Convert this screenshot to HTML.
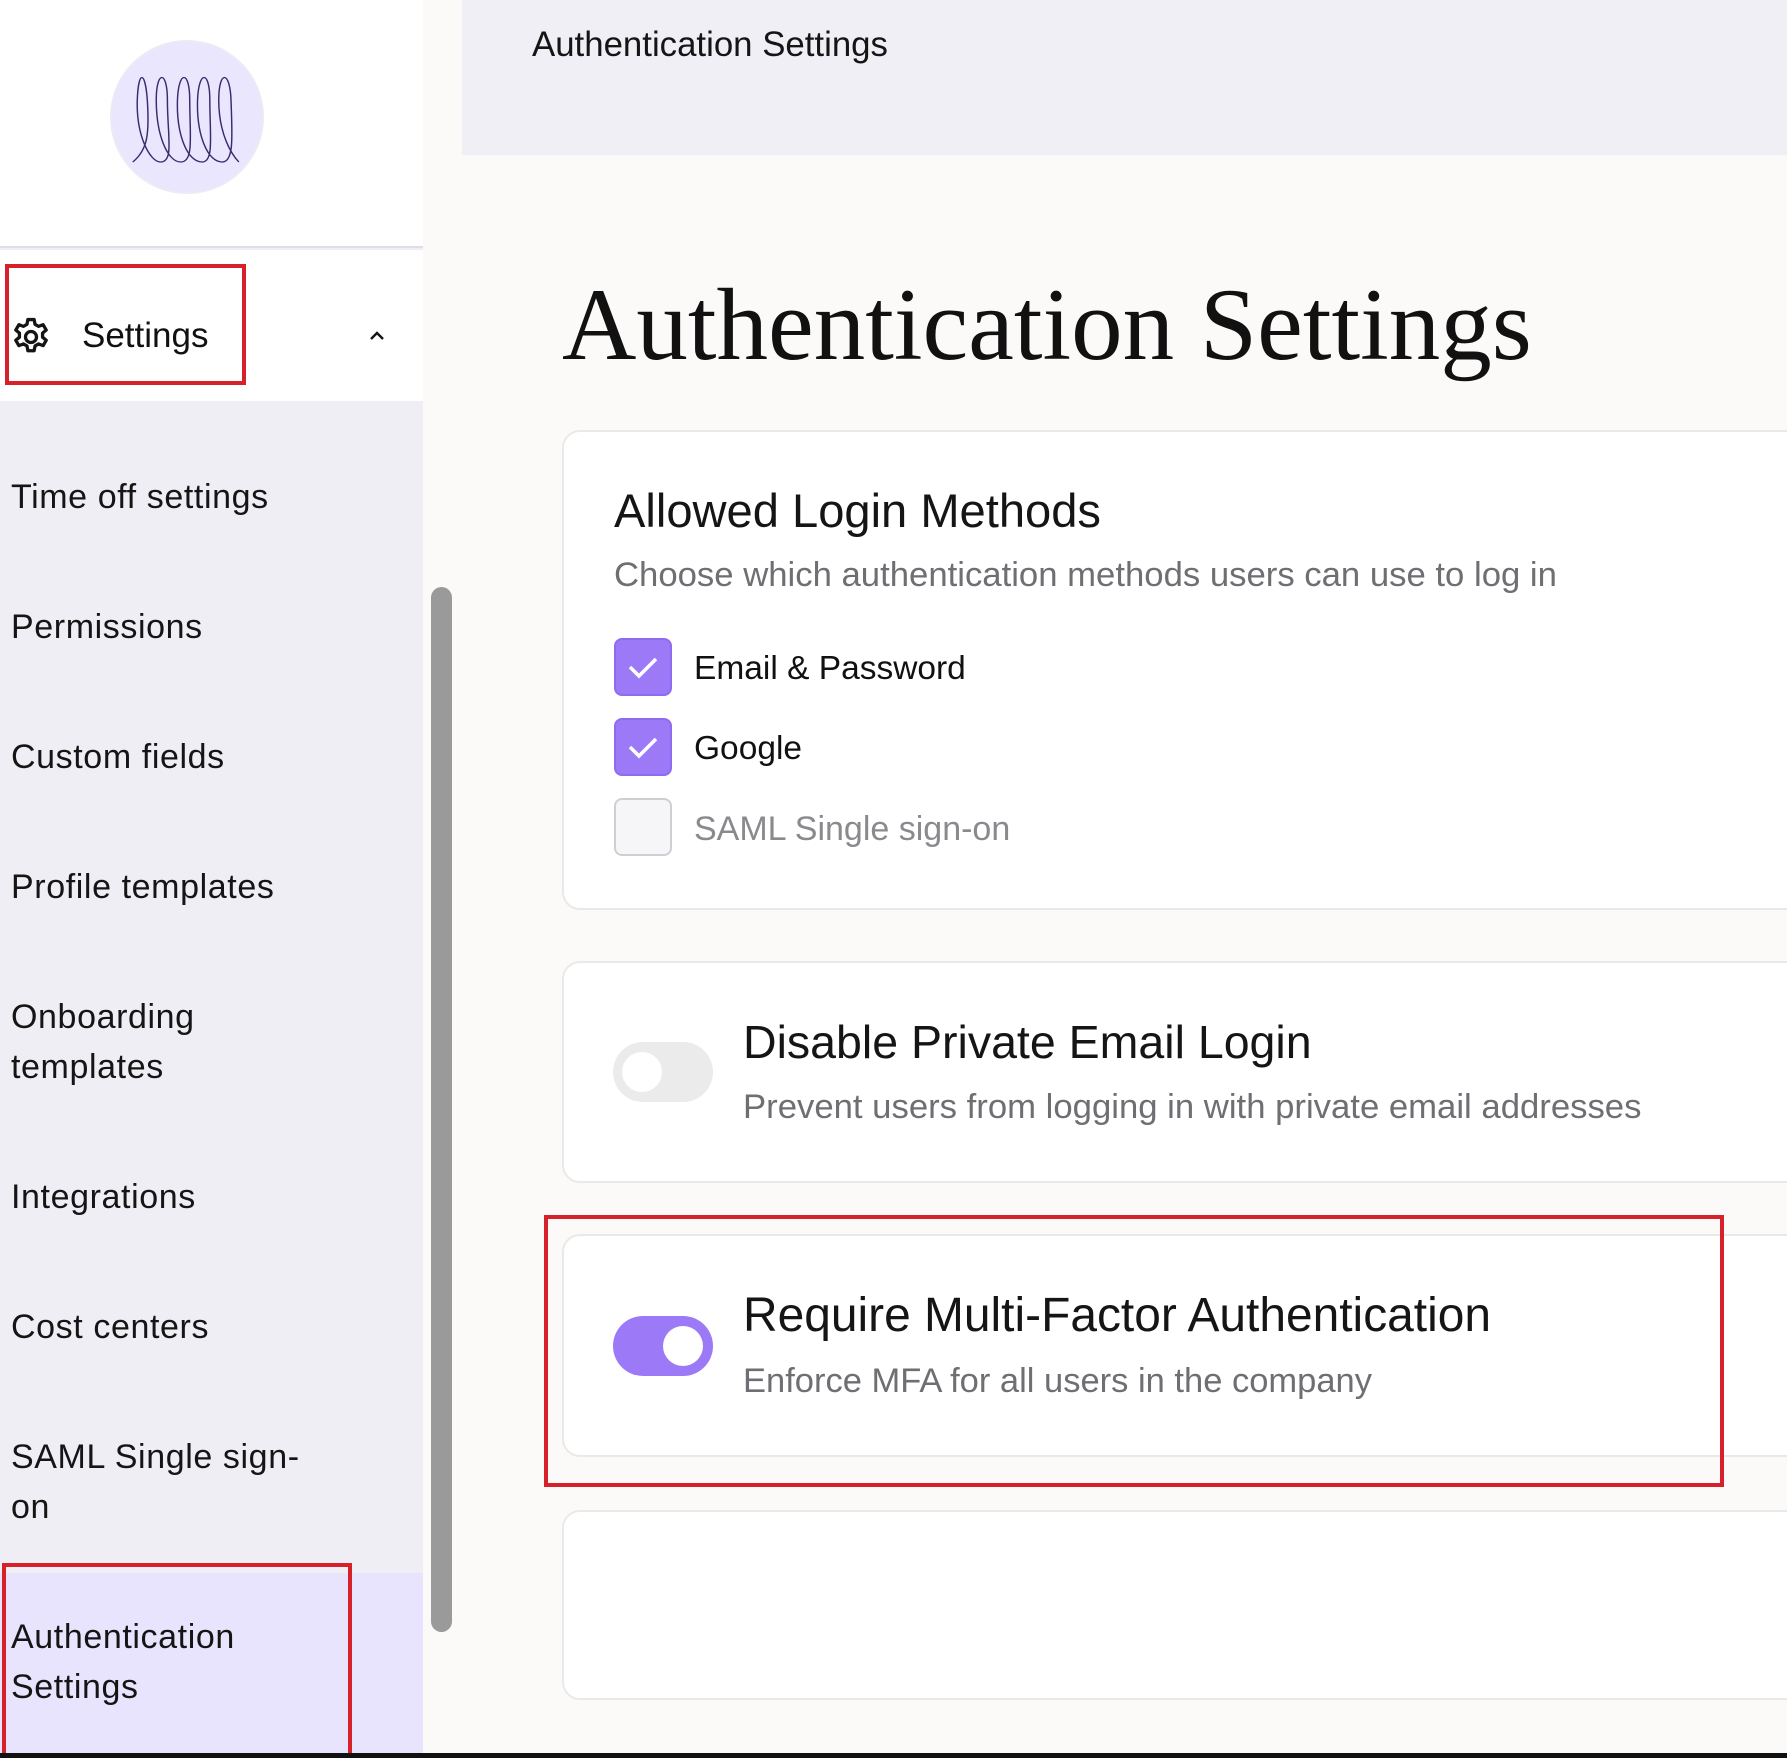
<!DOCTYPE html>
<html><head><meta charset="utf-8"><style>
*{margin:0;padding:0;box-sizing:border-box}
body{width:1787px;height:1758px;overflow:hidden;background:#fcfaf9;font-family:"Liberation Sans",sans-serif;color:#111;position:relative}
.abs{position:absolute}
.side{left:0;top:0;width:423px;height:1758px;background:#efeef5}
.menu{left:11px;font-size:34px;letter-spacing:0.6px;line-height:50px;color:#151515;width:330px}
.card{position:absolute;left:562px;width:1300px;background:#fff;border:2px solid #ebe9e8;border-radius:18px}
.cb{position:absolute;left:614px;width:58px;height:58px;border-radius:8px;background:#9b79f7;border:2px solid #8d6cf0}
.lbl{position:absolute;left:694px;font-size:33.5px;line-height:40px}
.red{position:absolute;border:4px solid #d6212a}
.t{font-size:46.5px;line-height:52px;color:#151515}
.s{font-size:34.7px;line-height:40px;color:#6e6e73}
</style></head><body>
<div class="abs side"></div>
<div class="abs" style="left:0;top:0;width:423px;height:248px;background:#fff;border-bottom:2px solid #dfdfe3"></div>
<div class="abs" style="left:0;top:250px;width:423px;height:151px;background:#fff"></div>
<div class="abs" style="left:110px;top:40px;width:154px;height:154px;border-radius:50%;background:#e9e6fd;border:2px solid #eceaf5"></div>
<svg class="abs" style="left:110px;top:40px" width="154" height="154" viewBox="0 0 154 154">
<g fill="none" stroke="#3b2a6e" stroke-width="1.3" transform="translate(15 0) scale(1.116 1)">
<path d="M7 122 C20 110 22 95 20 60 C18 30 12 30 11 60 C10 95 22 122 32 122 C44 122 38 95 38 60 C38 30 28 30 28 60 C28 95 38 122 50 122 C62 122 58 95 58 60 C58 30 48 30 47 60 C46 95 56 122 69 122 C80 122 76 95 76 60 C76 30 66 30 65 60 C64 95 74 122 87 122 C98 122 96 95 95 60 C94 30 84 30 84 60 C84 95 96 115 102 122"/>
</g></svg>
<svg class="abs" style="left:9px;top:315px" width="44" height="44" viewBox="0 0 24 24" fill="none" stroke="#151515" stroke-width="1.8" stroke-linejoin="round"><path d="M10.3 2.5h3.4l.5 2.6 1.9 1.1 2.5-.9 1.7 2.9-2 1.7v2.2l2 1.7-1.7 2.9-2.5-.9-1.9 1.1-.5 2.6h-3.4l-.5-2.6-1.9-1.1-2.5.9-1.7-2.9 2-1.7v-2.2l-2-1.7 1.7-2.9 2.5.9 1.9-1.1z"/><circle cx="12" cy="12" r="3"/></svg>
<div class="abs" style="left:82px;top:316px;font-size:35px;line-height:40px">Settings</div>
<svg class="abs" style="left:367px;top:326px" width="20" height="20" viewBox="0 0 20 20"><path d="M4 13 L10 7 L16 13" fill="none" stroke="#151515" stroke-width="2.4"/></svg>
<div class="red" style="left:5px;top:264px;width:241px;height:121px"></div>
<div class="abs menu" style="top:472px">Time off settings</div>
<div class="abs menu" style="top:602px">Permissions</div>
<div class="abs menu" style="top:732px">Custom fields</div>
<div class="abs menu" style="top:862px">Profile templates</div>
<div class="abs menu" style="top:992px">Onboarding<br>templates</div>
<div class="abs menu" style="top:1172px">Integrations</div>
<div class="abs menu" style="top:1302px">Cost centers</div>
<div class="abs menu" style="top:1432px">SAML Single sign-<br>on</div>
<div class="abs" style="left:0;top:1573px;width:423px;height:185px;background:#e8e4fd"></div>
<div class="abs menu" style="top:1612px">Authentication<br>Settings</div>
<div class="red" style="left:2px;top:1563px;width:350px;height:195px"></div>
<div class="abs" style="left:431px;top:587px;width:21px;height:1045px;border-radius:11px;background:#9a9a9a"></div>
<div class="abs" style="left:462px;top:0;width:1325px;height:155px;background:#f0eff5"></div>
<div class="abs" style="left:532px;top:25px;font-size:34.8px;line-height:40px;color:#151515">Authentication Settings</div>
<div class="abs" style="left:562px;top:265px;font-family:'Liberation Serif',serif;font-size:103px;line-height:120px;color:#111">Authentication Settings</div>
<div class="card" style="top:430px;height:480px"></div>
<div class="abs t" style="left:614px;top:485px;font-size:47.1px">Allowed Login Methods</div>
<div class="abs s" style="left:614px;top:555px">Choose which authentication methods users can use to log in</div>
<div class="cb" style="top:638px"></div>
<div class="cb" style="top:718px"></div>
<svg class="abs" style="left:614px;top:638px" width="58" height="138"><path d="M16 29 L25 38 L42 21 M16 109 L25 118 L42 101" fill="none" stroke="#fff" stroke-width="3.5"/></svg>
<div class="cb" style="top:798px;background:#f6f5f8;border-color:#cfcfd3"></div>
<div class="lbl" style="top:649px">Email &amp; Password</div>
<div class="lbl" style="top:729px">Google</div>
<div class="lbl" style="top:809px;color:#8a8a8e;font-size:34px">SAML Single sign-on</div>
<div class="card" style="top:961px;height:222px"></div>
<div class="abs" style="left:613px;top:1042px;width:100px;height:60px;border-radius:30px;background:#ebebeb"></div>
<div class="abs" style="left:622px;top:1052px;width:40px;height:40px;border-radius:50%;background:#fff"></div>
<div class="abs t" style="left:743px;top:1016px">Disable Private Email Login</div>
<div class="abs s" style="left:743px;top:1087px">Prevent users from logging in with private email addresses</div>
<div class="card" style="top:1234px;height:223px"></div>
<div class="abs" style="left:613px;top:1316px;width:100px;height:60px;border-radius:30px;background:#9b79f7"></div>
<div class="abs" style="left:663px;top:1326px;width:40px;height:40px;border-radius:50%;background:#fff"></div>
<div class="abs t" style="left:743px;top:1290px;font-size:47.9px">Require Multi-Factor Authentication</div>
<div class="abs s" style="left:743px;top:1361px;font-size:34.5px">Enforce MFA for all users in the company</div>
<div class="red" style="left:544px;top:1215px;width:1180px;height:272px"></div>
<div class="card" style="top:1510px;height:190px"></div>
<div class="abs" style="left:0;top:1753px;width:1787px;height:5px;background:#111"></div>
</body></html>
